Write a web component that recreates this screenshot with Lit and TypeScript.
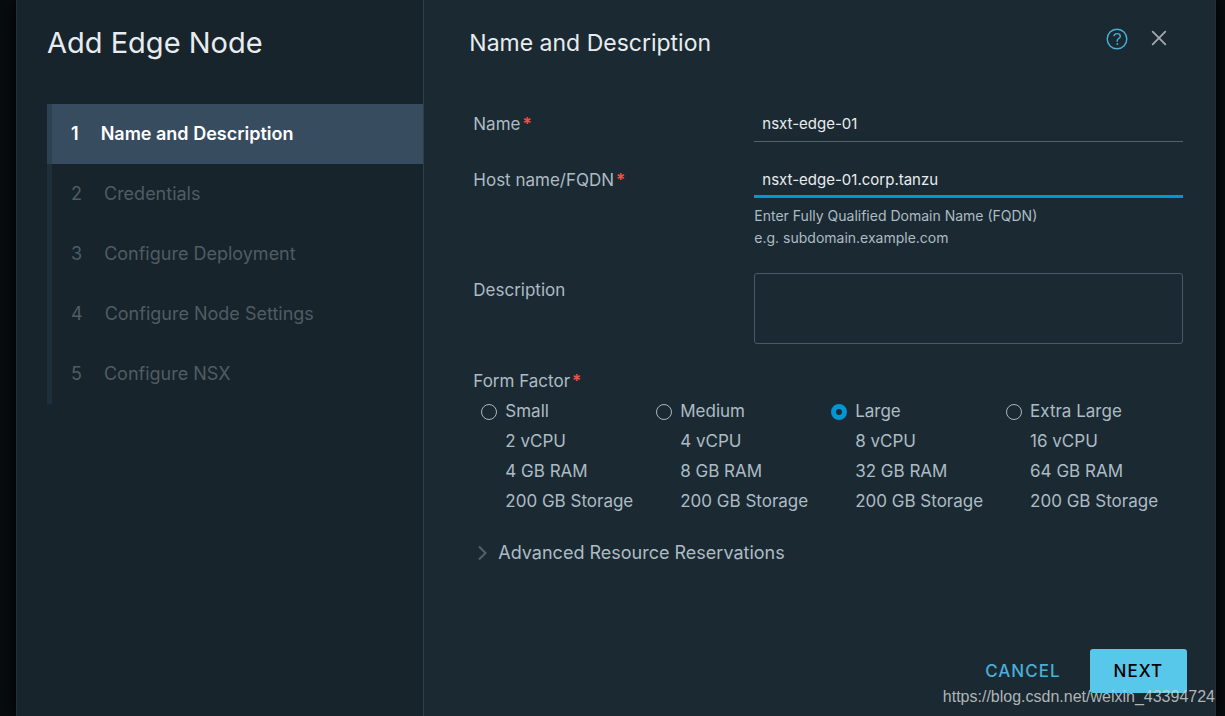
import { LitElement, html, css, svg } from "lit";
import { customElement, state } from "lit/decorators.js";
import { classMap } from "lit/directives/class-map.js";

interface FormFactor {
  id: string;
  name: string;
  specs: string[];
}

const STEPS = [
  "Name and Description",
  "Credentials",
  "Configure Deployment",
  "Configure Node Settings",
  "Configure NSX",
];

const FORM_FACTORS: FormFactor[] = [
  { id: "small", name: "Small", specs: ["2 vCPU", "4 GB RAM", "200 GB Storage"] },
  { id: "medium", name: "Medium", specs: ["4 vCPU", "8 GB RAM", "200 GB Storage"] },
  { id: "large", name: "Large", specs: ["8 vCPU", "32 GB RAM", "200 GB Storage"] },
  { id: "xlarge", name: "Extra Large", specs: ["16 vCPU", "64 GB RAM", "200 GB Storage"] },
];

const helpIcon = svg`
  <circle cx="12" cy="12" r="9.8" stroke-width="1.4"></circle>
  <path d="M8.9 8.6C9.5 7.2 10.7 6.6 12.1 6.6C14 6.6 15.3 7.7 15.3 9.3C15.3 11.4 12.2 11.6 12.2 13.6V14.2" stroke-width="1.4"></path>
  <circle cx="12.2" cy="17" r="0.5" stroke-width="1"></circle>`;

@customElement("app-root")
export class AppRoot extends LitElement {
  static styles = css`
    :host {
      display: block;
      position: relative;
      box-sizing: border-box;
      min-height: 100vh;
      padding: 0 9px 0 16px;
      background: #070c10;
      color: #adbbc4;
      font-family: Inter, "Liberation Sans", sans-serif;
      font-size: 17px;
      line-height: 30px;
    }
    * {
      box-sizing: border-box;
    }
    button,
    input,
    textarea {
      font: inherit;
      color: inherit;
      margin: 0;
    }
    button {
      padding: 0;
      border: 0;
      background: none;
      cursor: pointer;
    }
    .wizard {
      display: grid;
      grid-template-columns: 34% 1fr;
      min-height: 100vh;
      background: #1b2a32;
      border: solid #2a2e31;
      border-width: 0 1px;
      box-shadow: 0 0 16px #000000;
    }
    .sidebar {
      padding: 25px 0 24px 30px;
      background: #17242b;
      border-right: 1px solid #29404e;
    }
    .title {
      margin: 0 0 43px;
      font-size: 29px;
      font-weight: 400;
      line-height: 36px;
      color: #e9ecef;
    }
    .steps {
      margin: 0;
      padding: 0;
      list-style: none;
    }
    .step {
      display: flex;
      align-items: center;
      gap: 22px;
      width: 100%;
      height: 60px;
      padding: 0 0 0 19px;
      border-left: 5px solid #1c2f3a;
      color: #505c64;
      font-size: 18px;
      text-align: left;
    }
    .step.active {
      background: #384c60;
      border-left-color: #2c4250;
      color: #ffffff;
      font-weight: 600;
    }
    .main {
      display: flex;
      flex-direction: column;
      padding: 25px 28px 23px 45px;
    }
    .header {
      display: flex;
      align-items: flex-start;
      gap: 18px;
      margin-bottom: 46px;
      padding-right: 16px;
    }
    .heading {
      flex: 1;
      margin: 0;
      font-size: 23px;
      font-weight: 400;
      line-height: 36px;
      color: #e9ecef;
    }
    .icon-button {
      width: 24px;
      height: 28px;
      color: #49afd9;
    }
    .icon-button.close {
      color: #a3a9ad;
    }
    .icon {
      display: block;
      width: 24px;
      height: 24px;
      fill: none;
      stroke: currentColor;
      stroke-linecap: round;
    }
    .form {
      flex: 1;
      padding: 0 4px;
    }
    .row {
      display: grid;
      grid-template-columns: 281px 1fr;
      margin-bottom: 21px;
    }
    .label {
      line-height: 35px;
    }
    .required {
      margin-left: 2px;
      color: #f54f47;
      font-weight: 600;
    }
    .input {
      display: block;
      width: 100%;
      height: 35px;
      padding: 0 8px 2px;
      border: 0;
      border-bottom: 1px solid #52626b;
      border-radius: 0;
      outline: none;
      background: none;
      color: #e9ecef;
      font-size: 15px;
    }
    .input.focused {
      padding-bottom: 0;
      border-bottom: 3px solid #0095d3;
    }
    .hint {
      margin: 7px 0 3px;
      font-size: 14px;
      line-height: 22px;
    }
    .textarea {
      display: block;
      width: 100%;
      height: 71px;
      padding: 8px;
      border: 1px solid #495a64;
      border-radius: 3px;
      outline: none;
      background: none;
      resize: none;
    }
    .factors {
      margin: 22px 0;
      padding: 0;
      border: 0;
    }
    .legend {
      padding: 0;
    }
    .options {
      display: grid;
      grid-template-columns: repeat(4, 1fr);
      padding: 0 2px 0 8px;
    }
    .option {
      display: grid;
      grid-template-columns: 16px 1fr;
      column-gap: 8px;
      align-items: center;
    }
    .radio {
      appearance: none;
      width: 16px;
      height: 16px;
      margin-top: 2px;
      border: 1px solid #a9b6be;
      border-radius: 50%;
    }
    .radio:checked {
      border: 5px solid #0095d3;
    }
    .spec {
      grid-column: 2;
    }
    .disclosure {
      display: flex;
      align-items: center;
      gap: 9px;
      font-size: 18px;
    }
    .chevron {
      width: 16px;
      height: 16px;
      fill: none;
      stroke: #52626b;
      stroke-width: 2;
    }
    .footer {
      display: flex;
      justify-content: flex-end;
      gap: 5px;
    }
    .action {
      height: 44px;
      padding: 0 24px;
      border-radius: 3px;
      color: #49afd9;
      font-weight: 500;
      letter-spacing: 1px;
    }
    .action.primary {
      background: #57c8ea;
      color: #000000;
    }
    .watermark {
      position: absolute;
      right: 10px;
      bottom: 8px;
      color: rgba(205, 207, 209, 0.85);
      font-family: "Liberation Sans", Arial, sans-serif;
      font-size: 16px;
      line-height: 22px;
      pointer-events: none;
    }
  `;

  @state() private step = 0;
  @state() private factor = "large";

  private renderStep(label: string, index: number) {
    const active = index === this.step;
    return html`<li>
      <button
        type="button"
        class=${classMap({ step: true, active })}
        aria-current=${active ? "step" : "false"}
        @click=${() => (this.step = index)}
      >
        <span>${index + 1}</span><span>${label}</span>
      </button>
    </li>`;
  }

  private renderFactor(item: FormFactor) {
    return html`<label class="option">
      <input
        class="radio"
        type="radio"
        name="form-factor"
        .value=${item.id}
        .checked=${item.id === this.factor}
        @change=${() => (this.factor = item.id)}
      />
      <span>${item.name}</span>
      ${item.specs.map((spec) => html`<span class="spec">${spec}</span>`)}
    </label>`;
  }

  render() {
    return html`
      <div class="wizard" role="dialog" aria-labelledby="title">
        <nav class="sidebar">
          <h1 class="title" id="title">Add Edge Node</h1>
          <ol class="steps">
            ${STEPS.map((label, index) => this.renderStep(label, index))}
          </ol>
        </nav>
        <main class="main">
          <header class="header">
            <h2 class="heading">Name and Description</h2>
            <button class="icon-button" type="button" aria-label="Help">
              <svg class="icon" viewBox="0 0 24 24">${helpIcon}</svg>
            </button>
            <button class="icon-button close" type="button" aria-label="Close">
              <svg class="icon" viewBox="0 0 24 24">
                <path d="M5.7 4.7L18.3 17.3M18.3 4.7L5.7 17.3" stroke-width="1.8"></path>
              </svg>
            </button>
          </header>
          <form class="form">
            <div class="row">
              <label class="label" for="name">Name<span class="required">*</span></label>
              <input class="input" id="name" type="text" value="nsxt-edge-01" />
            </div>
            <div class="row">
              <label class="label" for="host">Host name/FQDN<span class="required">*</span></label>
              <div>
                <input
                  class="input focused"
                  id="host"
                  type="text"
                  value="nsxt-edge-01.corp.tanzu"
                  aria-describedby="host-hint"
                />
                <p class="hint" id="host-hint">
                  Enter Fully Qualified Domain Name (FQDN)<br />e.g. subdomain.example.com
                </p>
              </div>
            </div>
            <div class="row">
              <label class="label" for="description">Description</label>
              <textarea class="textarea" id="description"></textarea>
            </div>
            <fieldset class="factors">
              <legend class="legend">Form Factor<span class="required">*</span></legend>
              <div class="options">${FORM_FACTORS.map((item) => this.renderFactor(item))}</div>
            </fieldset>
            <button class="disclosure" type="button" aria-expanded="false">
              <svg class="chevron" viewBox="0 0 16 16"><path d="M6 1.5L12.5 8L6 14.5"></path></svg>
              Advanced Resource Reservations
            </button>
          </form>
          <footer class="footer">
            <button class="action" type="button">CANCEL</button>
            <button class="action primary" type="button">NEXT</button>
          </footer>
        </main>
      </div>
      <div class="watermark">https://blog.csdn.net/weixin_43394724</div>
    `;
  }
}
